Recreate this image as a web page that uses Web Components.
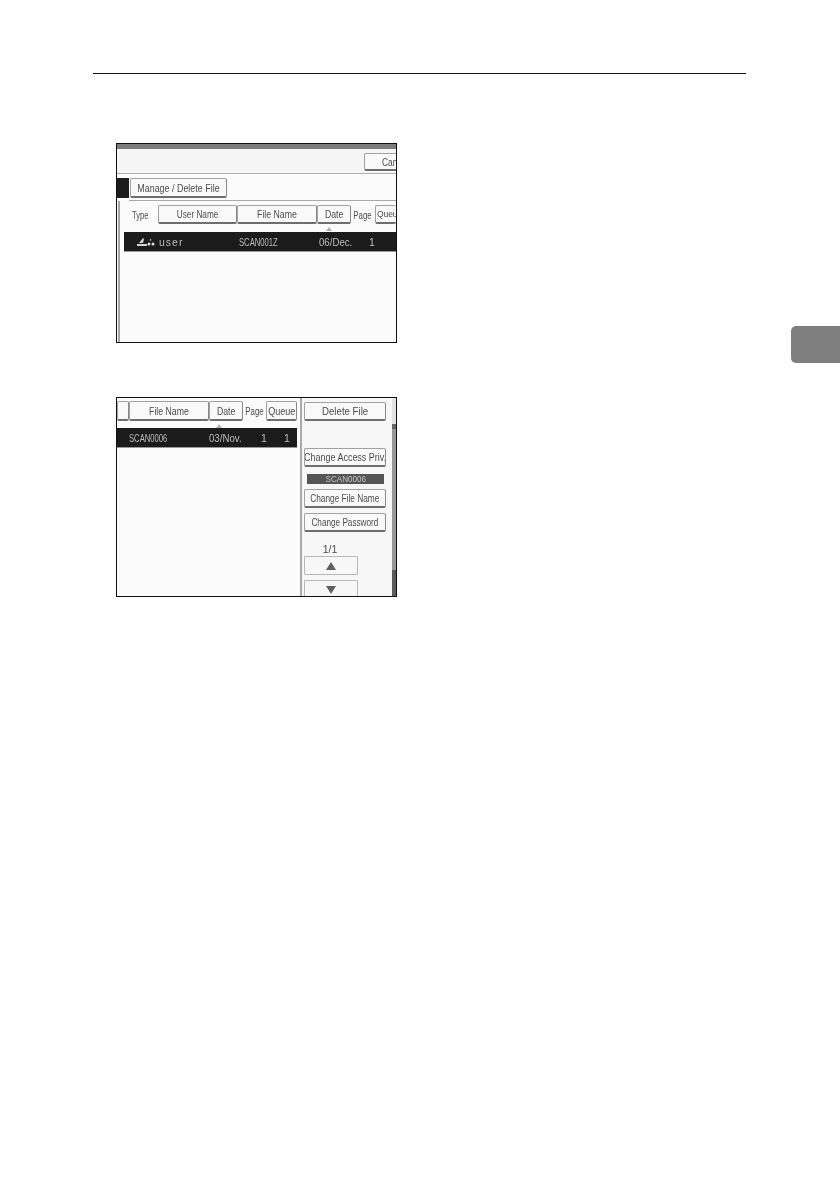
<!DOCTYPE html>
<html>
<head>
<meta charset="utf-8">
<title>Manual page</title>
<style>
  html, body { margin: 0; padding: 0; background: #fff; }
  body { width: 840px; height: 1190px; overflow: hidden; font-family: "Liberation Sans", Arial, sans-serif; }
</style>
</head>
<body>
<manual-page>
  <scan-shot slot="first" kind="type"></scan-shot>
  <scan-shot slot="second" kind="manage"></scan-shot>
</manual-page>

<script>
class ManualPage extends HTMLElement {
  constructor() {
    super();
    this.shadowDOM = this.attachShadow({ mode: "open" });
    this.shadowDOM.innerHTML = `
      <style>
        :host { display: block; width: 840px; height: 1190px; box-sizing: border-box; padding-top: 73px; }
        .rule { height: 1px; background: #111; margin: 0 94px 0 93px; }
        .body { display: flex; justify-content: space-between; align-items: flex-start; padding: 69px 0 0 116px; }
        .shots { display: flex; flex-direction: column; gap: 54px; }
        .tab { width: 49px; height: 37px; margin-top: 183px; background: #7f7f7f; border-radius: 5px 0 0 5px; }
      </style>
      <div class="rule"></div>
      <div class="body">
        <div class="shots">
          <slot name="first"></slot>
          <slot name="second"></slot>
        </div>
        <div class="tab"></div>
      </div>
    `;
  }
}

class UiBtn extends HTMLElement {
  constructor() {
    super();
    this.shadowDOM = this.attachShadow({ mode: "open" });
    this.shadowDOM.innerHTML = `
      <style>
        :host {
          display: flex; align-items: center; justify-content: center; box-sizing: border-box;
          border: 1px solid #a2a2a2; border-bottom: 2px solid #6e6e6e; border-right-color: #888;
          background: #f9f9f9; color: #4c4c4c; font-size: 10.5px; white-space: nowrap; overflow: hidden;
          border-radius: 2px;
        }
        /* the panel's bitmap font is tall and narrow */
        .t { flex: none; display: block; transform: scaleX(var(--sx, .85)); transform-origin: var(--ox, center); }
      </style>
      <span class="t"><slot></slot></span>
    `;
  }
}

class ScanShot extends HTMLElement {
  constructor() {
    super();
    this.shadowDOM = this.attachShadow({ mode: "open" });
    const kind = this.getAttribute("kind");
    this.shadowDOM.innerHTML = `
      <style>
        :host {
          display: block; box-sizing: border-box; width: 281px; height: 200px; overflow: hidden;
          border: 1px solid #111; background: #fbfbfb; color: #4c4c4c;
          font: 10.5px "Liberation Sans", Arial, sans-serif;
        }
        .wrap { filter: blur(0.45px) grayscale(1); height: 100%; }
        .topbar { height: 5px; background: #7c7c7c; }
        .cancel-band { height: 25px; box-sizing: border-box; background: #f5f5f5; border-bottom: 1px solid #b0b0b0; display: flex; justify-content: flex-end; padding-top: 4px; }
        .cancel-band ui-btn { width: 32px; height: 18px; justify-content: flex-start; padding-left: 17px; border-right: 0; border-radius: 2px 0 0 2px; --sx: .8; --ox: left; }
        .tabs { display: flex; height: 26px; box-sizing: border-box; padding-top: 4px; }
        .tabs .black { width: 12px; height: 20px; margin-right: 1px; background: #1c1c1c; }
        .tabs ui-btn { width: 97px; height: 20px; }
        .panel { margin-left: 1px; height: 145px; box-sizing: border-box; border-left: 2px solid #a5a5a5; }
        .line { height: 1px; background: #aaa; margin-left: 12px; }
        .cols { display: flex; align-items: center; }
        .cols ui-btn { height: 19px; flex: none; }
        .cols .lbl { flex: none; display: block; white-space: nowrap; transform-origin: left; }
        .sort { width: 0; height: 0; border: 3px solid transparent; border-top: 0; border-bottom: 4px solid #b0b0b0; }
        .row { background: #1b1b1b; color: #bdbdbd; display: flex; align-items: center; height: 19px; box-shadow: 0 1px 0 #999; white-space: nowrap; }
        .row span { flex: none; display: block; transform-origin: left; }
        .row .id { transform: scaleX(.73); }
        .row .dt { transform: scaleX(.92); }

        .first .cols { padding: 4px 0 0 12px; }
        .first .sort { margin: 3px 0 0 206px; }
        .first .row { margin: 1px 0 0 4px; }
        .first .row .user { font-size: 10.5px; letter-spacing: 1px; width: 80px; margin-left: 3px; }
        .first .row .icons { margin-left: 12px; width: 20px; height: 11px; flex: none; }

        .second { display: flex; height: 100%; }
        .left { width: 183px; flex: none; box-sizing: border-box; padding-top: 3px; }
        .second .cols ui-btn { height: 20px; }
        .second .sort { margin: 3px 0 0 99px; }
        .second .row { width: 180px; }
        .side { flex: none; width: 92px; box-sizing: border-box; border-left: 2px solid #aaa; padding: 4px 0 0 2px; display: flex; flex-direction: column; background: #f7f7f7; }
        .side > * { flex: none; }
        .side ui-btn { width: 82px; height: 19px; }
        .side .name { width: 77px; height: 10px; margin: 7px 0 5px 3px; background: #555; color: #c4c4c4; display: flex; align-items: center; justify-content: center; font-size: 9.5px; line-height: 10px; }
        .side .name span { flex: none; display: block; transform: scaleX(.85); }
        .side .pg { text-align: center; width: 52px; margin-top: 10px; height: 14px; line-height: 14px; }
        .side .arrow { width: 54px; height: 19px; border: 1px solid #b8b8b8; border-radius: 1px; background: #f7f7f7; display: flex; align-items: center; justify-content: center; box-sizing: border-box; }
        .tri { width: 0; height: 0; border-left: 5px solid transparent; border-right: 5px solid transparent; }
        .tri.up { border-bottom: 8px solid #606060; }
        .tri.down { border-top: 8px solid #606060; }
        .strip { flex: none; width: 4px; background: linear-gradient(#e4e4e4 0 26px, #666 26px 31px, #999 31px 172px, #5c5c5c 172px); }
      </style>
      <div class="wrap">${kind === "type" ? ScanShot.first() : ScanShot.second()}</div>
    `;
  }

  static first() {
    return `
      <div class="first">
        <div class="topbar"></div>
        <div class="cancel-band"><ui-btn>Can</ui-btn></div>
        <div class="tabs"><div class="black"></div><ui-btn>Manage / Delete File</ui-btn></div>
        <div class="line"></div>
        <div class="panel">
          <div class="cols">
            <span class="lbl" style="width:26px;transform:scaleX(.72)">Type</span>
            <ui-btn style="width:79px;--sx:.78">User Name</ui-btn>
            <ui-btn style="width:80px;--sx:.83">File Name</ui-btn>
            <ui-btn style="width:34px;--sx:.83">Date</ui-btn>
            <span class="lbl" style="width:24px;padding-left:3px;box-sizing:border-box;transform:scaleX(.75)">Page</span>
            <ui-btn style="width:21px;justify-content:flex-start;padding-left:1px;border-right:0;font-size:8.5px;letter-spacing:-.1px;--sx:1;--ox:left">Queu</ui-btn>
          </div>
          <div class="sort"></div>
          <div class="row">
            <svg class="icons" viewBox="0 0 20 11">
              <path d="M1 10h10V8H1zM3 7l4-5 1 1-1 4z" fill="#d4d4d4"/>
              <path d="M13 4.5l1.5-2 1.5 2z" fill="#999"/>
              <circle cx="13" cy="8" r="1.5" fill="#ddd"/><circle cx="17" cy="8" r="1.5" fill="#ddd"/>
            </svg>
            <span class="user">user</span>
            <span class="id" style="width:80px">SCAN001Z</span>
            <span class="dt" style="width:50px">06/Dec.</span>
            <span>1</span>
          </div>
        </div>
      </div>`;
  }

  static second() {
    return `
      <div class="second">
        <div class="left">
          <div class="cols">
            <ui-btn style="width:12px"></ui-btn>
            <ui-btn style="width:80px;--sx:.83">File Name</ui-btn>
            <ui-btn style="width:34px;--sx:.83">Date</ui-btn>
            <span class="lbl" style="width:23px;padding-left:3px;box-sizing:border-box;transform:scaleX(.75)">Page</span>
            <ui-btn style="width:31px;--sx:.86">Queue</ui-btn>
          </div>
          <div class="sort"></div>
          <div class="row">
            <span class="id" style="width:80px;margin-left:12px">SCAN0006</span>
            <span class="dt" style="width:52px">03/Nov.</span>
            <span style="width:23px">1</span>
            <span>1</span>
          </div>
        </div>
        <div class="side">
          <ui-btn style="--sx:.92">Delete File</ui-btn>
          <ui-btn style="margin-top:27px;--sx:.855">Change Access Priv.</ui-btn>
          <div class="name"><span>SCAN0006</span></div>
          <ui-btn style="--sx:.79">Change File Name</ui-btn>
          <ui-btn style="margin-top:5px;--sx:.78">Change Password</ui-btn>
          <div class="pg">1/1</div>
          <div class="arrow"><div class="tri up"></div></div>
          <div class="arrow" style="margin-top:5px"><div class="tri down"></div></div>
        </div>
        <div class="strip"></div>
      </div>`;
  }
}

customElements.define("ui-btn", UiBtn);
customElements.define("scan-shot", ScanShot);
customElements.define("manual-page", ManualPage);
</script>
</body>
</html>
